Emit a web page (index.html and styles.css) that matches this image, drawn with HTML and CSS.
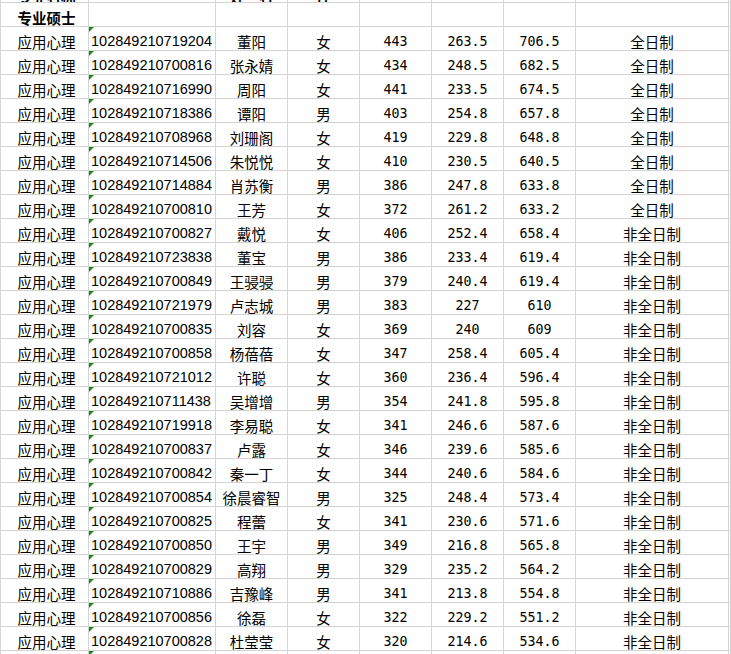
FILE: index.html
```html
<!DOCTYPE html>
<html lang="zh">
<head>
<meta charset="utf-8">
<title>专业硕士</title>
<link rel="stylesheet" href="styles.css">
</head>
<body>
<div class="sheet">
  <div class="row top">
    <div class="c a bold"><span>专业名称</span></div><div class="c b"></div><div class="c name bold"><span>姓　名</span></div><div class="c sex bold"><span>性</span></div><div class="c"></div><div class="c"></div><div class="c"></div><div class="c"></div><div class="c"></div>
  </div>
  <div class="row">
    <div class="c a bold">专业硕士</div><div class="c b"></div><div class="c"></div><div class="c"></div><div class="c"></div><div class="c"></div><div class="c"></div><div class="c"></div><div class="c"></div>
  </div>
  <div class="row"><div class="c a">应用心理</div><div class="c b id">102849210719204</div><div class="c name">董阳</div><div class="c sex">女</div><div class="c num">443</div><div class="c num">263.5</div><div class="c num">706.5</div><div class="c type">全日制</div><div class="c"></div></div>
  <div class="row"><div class="c a">应用心理</div><div class="c b id">102849210700816</div><div class="c name">张永婧</div><div class="c sex">女</div><div class="c num">434</div><div class="c num">248.5</div><div class="c num">682.5</div><div class="c type">全日制</div><div class="c"></div></div>
  <div class="row"><div class="c a">应用心理</div><div class="c b id">102849210716990</div><div class="c name">周阳</div><div class="c sex">女</div><div class="c num">441</div><div class="c num">233.5</div><div class="c num">674.5</div><div class="c type">全日制</div><div class="c"></div></div>
  <div class="row"><div class="c a">应用心理</div><div class="c b id">102849210718386</div><div class="c name">谭阳</div><div class="c sex">男</div><div class="c num">403</div><div class="c num">254.8</div><div class="c num">657.8</div><div class="c type">全日制</div><div class="c"></div></div>
  <div class="row"><div class="c a">应用心理</div><div class="c b id">102849210708968</div><div class="c name">刘珊阁</div><div class="c sex">女</div><div class="c num">419</div><div class="c num">229.8</div><div class="c num">648.8</div><div class="c type">全日制</div><div class="c"></div></div>
  <div class="row"><div class="c a">应用心理</div><div class="c b id">102849210714506</div><div class="c name">朱悦悦</div><div class="c sex">女</div><div class="c num">410</div><div class="c num">230.5</div><div class="c num">640.5</div><div class="c type">全日制</div><div class="c"></div></div>
  <div class="row"><div class="c a">应用心理</div><div class="c b id">102849210714884</div><div class="c name">肖苏衡</div><div class="c sex">男</div><div class="c num">386</div><div class="c num">247.8</div><div class="c num">633.8</div><div class="c type">全日制</div><div class="c"></div></div>
  <div class="row"><div class="c a">应用心理</div><div class="c b id">102849210700810</div><div class="c name">王芳</div><div class="c sex">女</div><div class="c num">372</div><div class="c num">261.2</div><div class="c num">633.2</div><div class="c type">全日制</div><div class="c"></div></div>
  <div class="row"><div class="c a">应用心理</div><div class="c b id">102849210700827</div><div class="c name">戴悦</div><div class="c sex">女</div><div class="c num">406</div><div class="c num">252.4</div><div class="c num">658.4</div><div class="c type">非全日制</div><div class="c"></div></div>
  <div class="row"><div class="c a">应用心理</div><div class="c b id">102849210723838</div><div class="c name">董宝</div><div class="c sex">男</div><div class="c num">386</div><div class="c num">233.4</div><div class="c num">619.4</div><div class="c type">非全日制</div><div class="c"></div></div>
  <div class="row"><div class="c a">应用心理</div><div class="c b id">102849210700849</div><div class="c name">王骎骎</div><div class="c sex">男</div><div class="c num">379</div><div class="c num">240.4</div><div class="c num">619.4</div><div class="c type">非全日制</div><div class="c"></div></div>
  <div class="row"><div class="c a">应用心理</div><div class="c b id">102849210721979</div><div class="c name">卢志城</div><div class="c sex">男</div><div class="c num">383</div><div class="c num">227</div><div class="c num">610</div><div class="c type">非全日制</div><div class="c"></div></div>
  <div class="row"><div class="c a">应用心理</div><div class="c b id">102849210700835</div><div class="c name">刘容</div><div class="c sex">女</div><div class="c num">369</div><div class="c num">240</div><div class="c num">609</div><div class="c type">非全日制</div><div class="c"></div></div>
  <div class="row"><div class="c a">应用心理</div><div class="c b id">102849210700858</div><div class="c name">杨蓓蓓</div><div class="c sex">女</div><div class="c num">347</div><div class="c num">258.4</div><div class="c num">605.4</div><div class="c type">非全日制</div><div class="c"></div></div>
  <div class="row"><div class="c a">应用心理</div><div class="c b id">102849210721012</div><div class="c name">许聪</div><div class="c sex">女</div><div class="c num">360</div><div class="c num">236.4</div><div class="c num">596.4</div><div class="c type">非全日制</div><div class="c"></div></div>
  <div class="row"><div class="c a">应用心理</div><div class="c b id">102849210711438</div><div class="c name">吴增增</div><div class="c sex">男</div><div class="c num">354</div><div class="c num">241.8</div><div class="c num">595.8</div><div class="c type">非全日制</div><div class="c"></div></div>
  <div class="row"><div class="c a">应用心理</div><div class="c b id">102849210719918</div><div class="c name">李易聪</div><div class="c sex">女</div><div class="c num">341</div><div class="c num">246.6</div><div class="c num">587.6</div><div class="c type">非全日制</div><div class="c"></div></div>
  <div class="row"><div class="c a">应用心理</div><div class="c b id">102849210700837</div><div class="c name">卢露</div><div class="c sex">女</div><div class="c num">346</div><div class="c num">239.6</div><div class="c num">585.6</div><div class="c type">非全日制</div><div class="c"></div></div>
  <div class="row"><div class="c a">应用心理</div><div class="c b id">102849210700842</div><div class="c name">秦一丁</div><div class="c sex">女</div><div class="c num">344</div><div class="c num">240.6</div><div class="c num">584.6</div><div class="c type">非全日制</div><div class="c"></div></div>
  <div class="row"><div class="c a">应用心理</div><div class="c b id">102849210700854</div><div class="c name">徐晨睿智</div><div class="c sex">男</div><div class="c num">325</div><div class="c num">248.4</div><div class="c num">573.4</div><div class="c type">非全日制</div><div class="c"></div></div>
  <div class="row"><div class="c a">应用心理</div><div class="c b id">102849210700825</div><div class="c name">程蕾</div><div class="c sex">女</div><div class="c num">341</div><div class="c num">230.6</div><div class="c num">571.6</div><div class="c type">非全日制</div><div class="c"></div></div>
  <div class="row"><div class="c a">应用心理</div><div class="c b id">102849210700850</div><div class="c name">王宇</div><div class="c sex">男</div><div class="c num">349</div><div class="c num">216.8</div><div class="c num">565.8</div><div class="c type">非全日制</div><div class="c"></div></div>
  <div class="row"><div class="c a">应用心理</div><div class="c b id">102849210700829</div><div class="c name">高翔</div><div class="c sex">男</div><div class="c num">329</div><div class="c num">235.2</div><div class="c num">564.2</div><div class="c type">非全日制</div><div class="c"></div></div>
  <div class="row"><div class="c a">应用心理</div><div class="c b id">102849210710886</div><div class="c name">吉豫峰</div><div class="c sex">男</div><div class="c num">341</div><div class="c num">213.8</div><div class="c num">554.8</div><div class="c type">非全日制</div><div class="c"></div></div>
  <div class="row"><div class="c a">应用心理</div><div class="c b id">102849210700856</div><div class="c name">徐磊</div><div class="c sex">女</div><div class="c num">322</div><div class="c num">229.2</div><div class="c num">551.2</div><div class="c type">非全日制</div><div class="c"></div></div>
  <div class="row"><div class="c a">应用心理</div><div class="c b id">102849210700828</div><div class="c name">杜莹莹</div><div class="c sex">女</div><div class="c num">320</div><div class="c num">214.6</div><div class="c num">534.6</div><div class="c type">非全日制</div><div class="c"></div></div>
  <div class="row"><div class="c a"></div><div class="c b id"></div><div class="c"></div><div class="c"></div><div class="c"></div><div class="c"></div><div class="c"></div><div class="c"></div><div class="c"></div></div>
</div>
</body>
</html>
```

FILE: styles.css
```css
html, body {
  margin: 0;
  padding: 0;
  background: #ffffff;
  overflow: hidden;
}

.sheet {
  display: flex;
  flex-direction: column;
  width: 731px;
  height: 654px;
  overflow: hidden;
  font-family: "Noto Sans CJK SC", "Noto Sans", sans-serif;
  font-size: 14.5px;
  color: #000000;
}

.row {
  display: grid;
  grid-template-columns: 89px 127px 72px 72px 72px 72px 72px 153px 1fr;
  height: 24px;
  flex: none;
}

.row.top {
  height: 3px;
}

.c {
  position: relative;
  box-sizing: border-box;
  border-right: 1px solid #d4d4d4;
  border-bottom: 1px solid #d4d4d4;
  padding-top: 6px;
  line-height: 17px;
  text-align: center;
  white-space: nowrap;
  overflow: hidden;
}

.a {
  padding-left: 4px;
  border-left: 1px solid #d4d4d4;
}

.bold {
  font-weight: 700;
}

.id {
  text-align: left;
  padding-left: 2px;
  font-family: "Liberation Sans", Arial, sans-serif;
  font-size: 14.5px;
}

.id::before {
  content: "";
  position: absolute;
  left: 0;
  top: 0;
  width: 0;
  height: 0;
  border-top: 5px solid #1a8a1a;
  border-right: 5px solid transparent;
}

.num {
  font-family: "DejaVu Sans Mono", "Liberation Mono", monospace;
  font-size: 13.3px;
}

.top .c {
  padding-top: 0;
  display: flex;
  align-items: flex-end;
  justify-content: center;
}

.top .c span {
  display: block;
  line-height: 16px;
  height: 16px;
  flex: none;
  margin-bottom: -3px;
}
```
